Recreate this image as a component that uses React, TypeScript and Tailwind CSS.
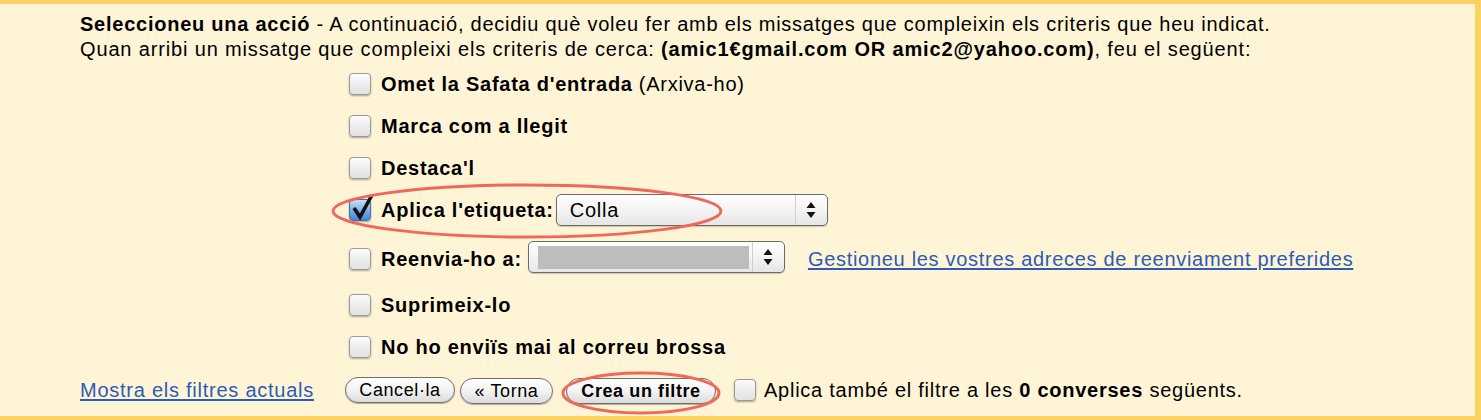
import React from "react";

// Mac-style checkbox
const Check = ({ checked = false }: { checked?: boolean }) => (
  <span className="relative inline-block w-[22px] h-[22px] shrink-0">
    <span
      className={
        "absolute inset-0 rounded-[4px] border shadow-[0_1px_2px_rgba(0,0,0,0.35)] " +
        (checked
          ? "border-[#4a6e9e] bg-gradient-to-b from-[#c9def6] via-[#7eaee5] to-[#3f86d8]"
          : "border-[#9a9a9a] bg-gradient-to-b from-[#fdfdfd] via-[#ededed] to-[#e2e2e2]")
      }
    />
    {checked && (
      <svg className="absolute left-[2px] -top-[6px]" width="24" height="27" viewBox="0 0 24 27">
        <path d="M3 15 L9 24 L21 2" fill="none" stroke="#111" strokeWidth="3.6" strokeLinejoin="miter" strokeLinecap="butt" />
      </svg>
    )}
  </span>
);

const Arrows = () => (
  <svg width="10" height="18" viewBox="0 0 10 18">
    <path d="M5 1 L9.5 7 H0.5 Z" fill="#111" />
    <path d="M5 17 L9.5 11 H0.5 Z" fill="#111" />
  </svg>
);

const Select = ({ width, children }: { width: string; children?: React.ReactNode }) => (
  <span
    className={
      "inline-flex items-stretch h-[32px] rounded-[5px] border border-[#6b6b6b] bg-gradient-to-b from-[#ffffff] via-[#f4f4f4] to-[#e6e6e6] shadow-[0_1px_1px_rgba(0,0,0,0.2)] " +
      width
    }
  >
    <span className="flex-1 flex items-center px-[3px] font-normal">{children}</span>
    <span className="w-[32px] flex items-center justify-center border-l border-[#cfcfcf]">
      <Arrows />
    </span>
  </span>
);

const Row = ({ children, checked = false, cls = "" }: { children: React.ReactNode; checked?: boolean; cls?: string }) => (
  <div className={"flex items-center gap-[10px] h-[42px] " + cls}>
    <Check checked={checked} />
    <div className="flex items-center font-bold">{children}</div>
  </div>
);

const Btn = ({ children, w, bold = false }: { children: React.ReactNode; w: string; bold?: boolean }) => (
  <button
    className={
      "h-[26px] rounded-[13px] border border-[#6f6f6f] bg-gradient-to-b from-[#ffffff] via-[#f3f3f3] to-[#dcdcdc] shadow-[0_1px_1px_rgba(0,0,0,0.3)] text-[18px] leading-none text-black tracking-[0.6px] text-center " +
      w +
      (bold ? " font-bold" : "")
    }
  >
    {children}
  </button>
);

export default function App() {
  return (
    <div
      className="relative w-[1481px] h-[420px] bg-[#fff5d6] border-t-4 border-r-[6px] border-b-4 border-[#fad163] text-[20px] tracking-[0.75px] text-black overflow-hidden"
      style={{ fontFamily: '"Liberation Sans", Arial, sans-serif' }}
    >
      <div className="pl-[80px] pt-[8px] leading-[25px]">
        <div>
          <b>Seleccioneu una acció</b> - A continuació, decidiu què voleu fer amb els missatges que compleixin els criteris que heu indicat.
        </div>
        <div className="tracking-[0.85px]">
          Quan arribi un missatge que compleixi els criteris de cerca: <b>(amic1€gmail.com OR amic2@yahoo.com)</b>, feu el següent:
        </div>
      </div>

      <div className="pl-[349px] pt-[1px]">
        <Row>
          Omet la Safata d'entrada<span className="font-normal ml-[6px]">(Arxiva-ho)</span>
        </Row>
        <Row>Marca com a llegit</Row>
        <Row>Destaca'l</Row>
        <Row checked>
          Aplica l'etiqueta:
          <span className="ml-[2px]">
            <Select width="w-[272px]">
              <span className="pl-[10px]">Colla</span>
            </Select>
          </span>
        </Row>
        <Row cls="mt-[7px] mb-[4px]">
          Reenvia-ho a:
          <span className="ml-[6px]">
            <Select width="w-[257px]">
              <span className="block w-full h-[23px] bg-[#bdbdbd] ml-[6px]" />
            </Select>
          </span>
          <a className="ml-[23px] font-normal text-[#2b5cb8] underline underline-offset-2 tracking-[0.7px]" href="#">
            Gestioneu les vostres adreces de reenviament preferides
          </a>
        </Row>
        <Row>Suprimeix-lo</Row>
        <Row>No ho enviïs mai al correu brossa</Row>
      </div>

      <div className="flex items-center pl-[80px] mt-[7px] h-[30px]">
        <a className="text-[#2b5cb8] underline underline-offset-2 mr-[31px] tracking-[0.75px]" href="#">
          Mostra els filtres actuals
        </a>
        <div className="flex items-center">
          <Btn w="w-[110px]">Cancel·la</Btn>
          <span className="ml-[5px]">
            <Btn w="w-[93px]">« Torna</Btn>
          </span>
          <span className="ml-[13px]">
            <Btn w="w-[150px]" bold>
              Crea un filtre
            </Btn>
          </span>
        </div>
        <span className="ml-[18px] mr-[8px] flex">
          <Check />
        </span>
        <span>
          Aplica també el filtre a les <b>0 converses</b> següents.
        </span>
      </div>

      {/* red annotation ellipses */}
      <svg className="absolute left-0 -top-[4px] pointer-events-none" width="1481" height="420">
        <ellipse cx="527" cy="211" rx="194" ry="26" fill="none" stroke="#f0675b" strokeWidth="3" />
        <ellipse cx="641" cy="393" rx="78" ry="20" fill="none" stroke="#f0675b" strokeWidth="3" />
      </svg>
    </div>
  );
}
